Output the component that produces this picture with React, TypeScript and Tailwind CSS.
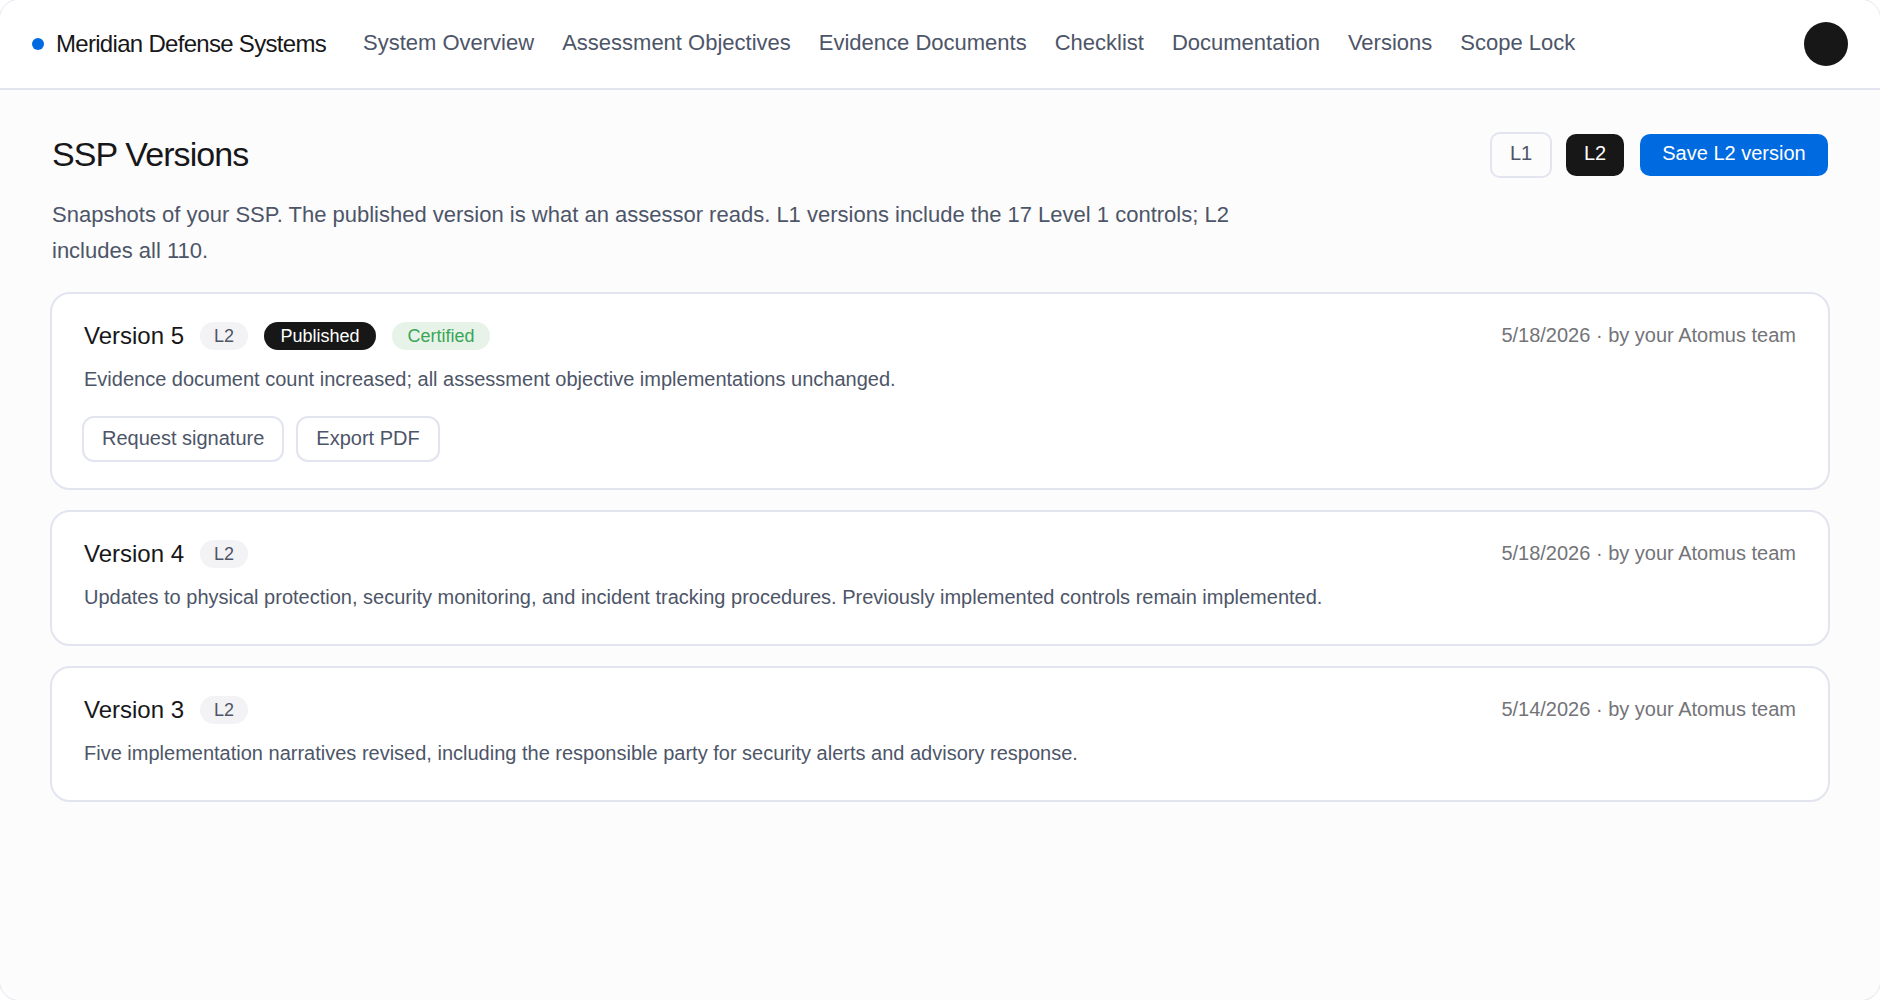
const nav = ["System Overview", "Assessment Objectives", "Evidence Documents", "Checklist", "Documentation", "Versions", "Scope Lock"]

const versions = [
  {
    name: "Version 5",
    meta: "5/18/2026 · by your Atomus team",
    summary: "Evidence document count increased; all assessment objective implementations unchanged.",
    current: true,
  },
  {
    name: "Version 4",
    meta: "5/18/2026 · by your Atomus team",
    summary:
      "Updates to physical protection, security monitoring, and incident tracking procedures. Previously implemented controls remain implemented.",
    current: false,
  },
  {
    name: "Version 3",
    meta: "5/14/2026 · by your Atomus team",
    summary: "Five implementation narratives revised, including the responsible party for security alerts and advisory response.",
    current: false,
  },
]

export default function App() {
  return (
    <div className="h-[1000px] overflow-hidden bg-white font-['Liberation_Sans',Arial,sans-serif] text-[#17171a]">
      {/* page frame: straight edges sit just outside the window, only the corners show */}
      <div className="-m-px h-[1002px] overflow-hidden rounded-[20px] border border-[#e2e5f0] bg-[#fcfcfc]">
        <header className="flex h-[90px] items-center justify-between border-b-2 border-[#e2e5f0] bg-white px-8">
          <div className="flex items-center">
            <span className="h-3 w-3 rounded-full bg-[#006ae0]" />
            <span className="ml-[12px] text-[24px] tracking-[-0.7px]">Meridian Defense Systems</span>
            <nav className="ml-[37px] flex gap-7 pb-1 text-[22px] text-[#4d5568]">
              {nav.map((item) => (
                <a key={item}>{item}</a>
              ))}
            </nav>
          </div>
          <div className="h-11 w-11 rounded-full bg-[#171717]" />
        </header>

        <main className="px-[52px] pt-[42px]">
          <div className="flex items-center justify-between">
            <h1 className="pb-[2px] text-[34px] leading-[44px] tracking-[-0.9px]">SSP Versions</h1>
            <div className="flex items-center">
              <button className="h-[46px] w-[62px] rounded-[10px] border-2 border-[#e2e5f0] pb-[4px] text-[20px] text-[#4d5568]">L1</button>
              <button className="ml-[14px] h-[42px] w-[58px] rounded-[10px] bg-[#171717] pb-[4px] text-[20px] text-white">L2</button>
              <button className="ml-4 h-[42px] w-[188px] rounded-[10px] bg-[#006ae0] pb-[4px] text-[20px] text-white">Save L2 version</button>
            </div>
          </div>

          <p className="mt-[19px] max-w-[1200px] text-[22px] leading-[36px] text-[#4d5568]">
            Snapshots of your SSP. The published version is what an assessor reads. L1 versions include the 17 Level 1 controls; L2 includes all 110.
          </p>

          <div className="-mx-[2px] mt-[23px] flex flex-col gap-[20px]">
            {versions.map((v) => (
              <section
                key={v.name}
                className={
                  v.current
                    ? "rounded-[20px] border-2 border-[#e2e5f0] bg-white px-[32px] pb-[26px] pt-[28px]"
                    : "rounded-[20px] border-2 border-[#e2e5f0] bg-white px-[32px] pb-[32px] pt-[28px]"
                }
              >
                <div className="flex items-center justify-between">
                  <div className="flex items-center">
                    <h2 className="text-[24px] leading-[28px]">{v.name}</h2>
                    <span className="ml-4 w-12 rounded-full bg-[#f3f3f5] py-[3px] text-center text-[18px] leading-[22px] text-[#4d5568]">L2</span>
                    {v.current && (
                      <>
                        <span className="ml-4 w-[112px] rounded-full bg-[#171717] py-[3px] text-center text-[18px] leading-[22px] text-white">Published</span>
                        <span className="ml-4 w-[98px] rounded-full bg-[#e7f3e9] py-[3px] text-center text-[18px] leading-[22px] text-[#3aa655]">Certified</span>
                      </>
                    )}
                  </div>
                  <span className="pb-[2px] text-[20px] leading-[26px] text-[#737378]">{v.meta}</span>
                </div>
                <p className="mt-[14px] text-[20px] leading-[30px] text-[#4d5568]">{v.summary}</p>
                {v.current && (
                  <div className="-ml-[2px] mt-[22px] flex gap-3">
                    <button className="h-[46px] rounded-[12px] border-2 border-[#e2e5f0] px-[18px] pb-[2px] text-[20px] text-[#4d5568]">Request signature</button>
                    <button className="h-[46px] rounded-[12px] border-2 border-[#e2e5f0] px-[18px] pb-[2px] text-[20px] text-[#4d5568]">Export PDF</button>
                  </div>
                )}
              </section>
            ))}
          </div>
        </main>
      </div>
    </div>
  )
}
